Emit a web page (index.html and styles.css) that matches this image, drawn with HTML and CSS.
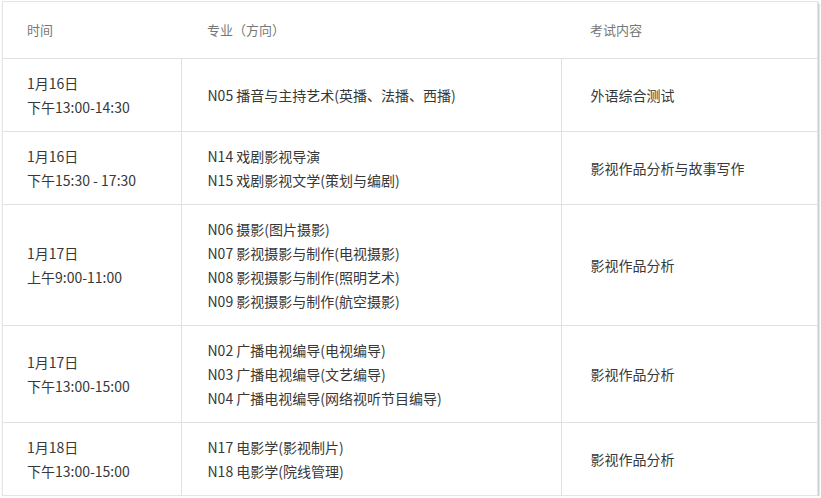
FILE: index.html
```html
<!DOCTYPE html>
<html lang="zh-CN">
<head>
<meta charset="utf-8">
<title>考试安排</title>
<link rel="stylesheet" href="styles.css">
</head>
<body>
<div class="wrap">
<table class="sched">
  <colgroup>
    <col class="c1"><col class="c2"><col class="c3">
  </colgroup>
  <thead>
    <tr><th>时间</th><th>专业（方向）</th><th class="cx">考试内容</th></tr>
  </thead>
  <tbody>
    <tr>
      <td>1月16日<br>下午13:00-14:30</td>
      <td>N05 播音与主持艺术(英播、法播、西播)</td>
      <td class="cx">外语综合测试</td>
    </tr>
    <tr>
      <td>1月16日<br>下午15:30 - 17:30</td>
      <td>N14 戏剧影视导演<br>N15 戏剧影视文学(策划与编剧)</td>
      <td class="cx">影视作品分析与故事写作</td>
    </tr>
    <tr>
      <td>1月17日<br>上午9:00-11:00</td>
      <td>N06 摄影(图片摄影)<br>N07 影视摄影与制作(电视摄影)<br>N08 影视摄影与制作(照明艺术)<br>N09 影视摄影与制作(航空摄影)</td>
      <td class="cx">影视作品分析</td>
    </tr>
    <tr>
      <td>1月17日<br>下午13:00-15:00</td>
      <td>N02 广播电视编导(电视编导)<br>N03 广播电视编导(文艺编导)<br>N04 广播电视编导(网络视听节目编导)</td>
      <td class="cx">影视作品分析</td>
    </tr>
    <tr>
      <td>1月18日<br>下午13:00-15:00</td>
      <td>N17 电影学(影视制片)<br>N18 电影学(院线管理)</td>
      <td class="cx">影视作品分析</td>
    </tr>
  </tbody>
</table>
</div>
</body>
</html>
```
FILE: styles.css
```css
html, body {
  margin: 0;
  padding: 0;
  background: #ffffff;
}
body {
  font-family: "Noto Sans CJK SC", "Microsoft YaHei", sans-serif;
  font-size: 14px;
  color: #383838;
}
.wrap {
  margin: 1px 0 0 2px;
  width: 816px;
  border: 1px solid #e4e4e4;
  box-shadow: 1px 2px 2px rgba(0, 0, 0, 0.28);
  box-sizing: border-box;
}
.sched {
  width: 100%;
  border-collapse: collapse;
  table-layout: fixed;
}
.c1 { width: 178px; }
.c2 { width: 380px; }
.sched th {
  font-weight: normal;
  font-size: 13px;
  color: #777777;
  text-align: left;
  padding: 16px 12px 16px 26px;
  line-height: 24px;
  height: 24px;
  border-bottom: 1px solid #e0e0e0;
}
.sched th:first-child { padding-left: 24px; }
.sched td {
  padding: 12px 12px 12px 26px;
  line-height: 24px;
  vertical-align: middle;
  border-bottom: 1px solid #e0e0e0;
  border-left: 1px solid #e0e0e0;
}
.sched td:first-child { border-left: none; padding-left: 24px; }
.sched tbody tr:last-child td { border-bottom: none; }
.sched .cx { padding-left: 29px; }
```
